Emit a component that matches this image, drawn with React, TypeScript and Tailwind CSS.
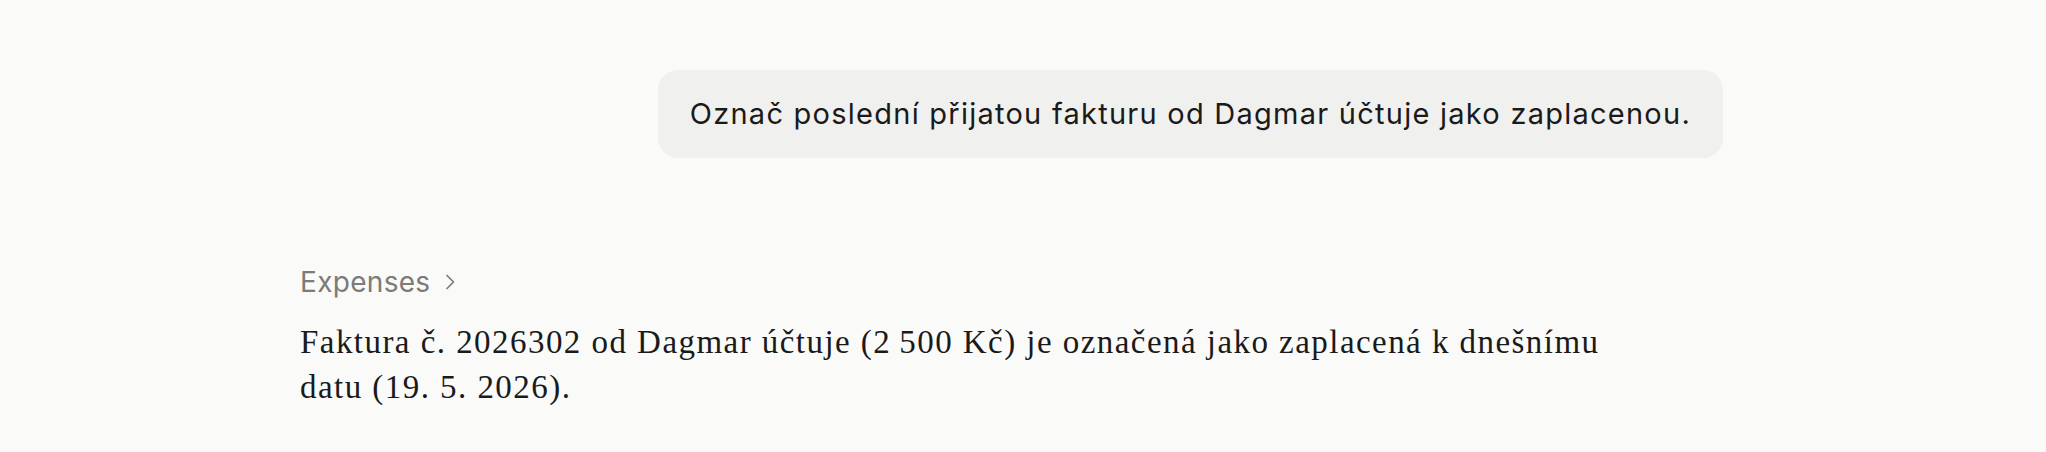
const SANS = "font-['Inter','Noto_Sans',sans-serif]"

function UserBubble({ text }: { text: string }) {
  return (
    <div className="flex justify-end">
      <div className={`${SANS} rounded-[20px] bg-[#f0f0ee] px-8 py-[25px] text-[29px] leading-[38px] tracking-[1.25px] text-[#1a1a1a]`}>
        {text}
      </div>
    </div>
  )
}

function Chevron() {
  return (
    <svg width="12" height="16" viewBox="0 0 12 16" fill="none" stroke="currentColor" strokeWidth="1.7" strokeLinecap="round" strokeLinejoin="round">
      <path d="M3 1.5 9.5 8 3 14.5" />
    </svg>
  )
}

function ToolReply() {
  return (
    <div className="mt-[106px]">
      <div className={`${SANS} flex items-center gap-[14px] text-[28px] leading-[36px] tracking-[0.3px] text-[#7b7b78]`}>
        <span>Expenses</span>
        <Chevron />
      </div>
      <p className="mt-[20px] w-[1330px] font-['Liberation_Serif',serif] text-[33px] leading-[45px] tracking-[1.45px] text-[#1a1a1a]">
        Faktura č. 2026302 od Dagmar účtuje (2{'\u202F'}500 Kč) je označená jako zaplacená k dnešnímu datu (19.{'\u00A0'}5.{'\u00A0'}2026).
      </p>
    </div>
  )
}

export default function App() {
  return (
    <div className="min-h-[452px] bg-[#fafaf9] pt-[70px]">
      <div className="ml-[300px] w-[1423px]">
        <UserBubble text="Označ poslední přijatou fakturu od Dagmar účtuje jako zaplacenou." />
        <ToolReply />
      </div>
    </div>
  )
}
